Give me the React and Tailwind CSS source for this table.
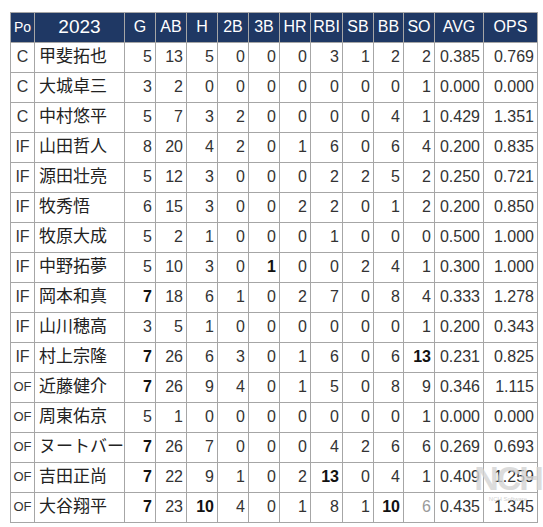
import React from "react";

const rows = [
  ["C", "甲斐拓也", "5", "13", "5", "0", "0", "0", "3", "1", "2", "2", "0.385", "0.769"],
  ["C", "大城卓三", "3", "2", "0", "0", "0", "0", "0", "0", "0", "1", "0.000", "0.000"],
  ["C", "中村悠平", "5", "7", "3", "2", "0", "0", "0", "0", "4", "1", "0.429", "1.351"],
  ["IF", "山田哲人", "8", "20", "4", "2", "0", "1", "6", "0", "6", "4", "0.200", "0.835"],
  ["IF", "源田壮亮", "5", "12", "3", "0", "0", "0", "2", "2", "5", "2", "0.250", "0.721"],
  ["IF", "牧秀悟", "6", "15", "3", "0", "0", "2", "2", "0", "1", "2", "0.200", "0.850"],
  ["IF", "牧原大成", "5", "2", "1", "0", "0", "0", "1", "0", "0", "0", "0.500", "1.000"],
  ["IF", "中野拓夢", "5", "10", "3", "0", "*1", "0", "0", "2", "4", "1", "0.300", "1.000"],
  ["IF", "岡本和真", "*7", "18", "6", "1", "0", "2", "7", "0", "8", "4", "0.333", "1.278"],
  ["IF", "山川穂高", "3", "5", "1", "0", "0", "0", "0", "0", "0", "1", "0.200", "0.343"],
  ["IF", "村上宗隆", "*7", "26", "6", "3", "0", "1", "6", "0", "6", "*13", "0.231", "0.825"],
  ["OF", "近藤健介", "*7", "26", "9", "4", "0", "1", "5", "0", "8", "9", "0.346", "1.115"],
  ["OF", "周東佑京", "5", "1", "0", "0", "0", "0", "0", "0", "0", "1", "0.000", "0.000"],
  ["OF", "ヌートバー", "*7", "26", "7", "0", "0", "0", "4", "2", "6", "6", "0.269", "0.693"],
  ["OF", "吉田正尚", "*7", "22", "9", "1", "0", "2", "*13", "0", "4", "1", "0.409", "1.259"],
  ["OF", "大谷翔平", "*7", "23", "*10", "4", "0", "1", "8", "1", "*10", "~6", "0.435", "1.345"],
];

const heads = ["G", "AB", "H", "2B", "3B", "HR", "RBI", "SB", "BB", "SO", "AVG", "OPS"];
const widths = [24, 90, 31, 31, 31, 31, 31, 31, 32, 31, 30, 31, 49, 54];

function Cell({ v }) {
  if (v.startsWith("*")) {
    return (
      <td className="border border-[#a6a6a6] text-right pr-[3px] text-[16px] font-bold text-[#111]">
        {v.slice(1)}
      </td>
    );
  }
  if (v.startsWith("~")) {
    return (
      <td className="border border-[#a6a6a6] text-right pr-[3px] text-[16px] text-[#9a9a9a]">
        {v.slice(1)}
      </td>
    );
  }
  return (
    <td className="border border-[#a6a6a6] text-right pr-[3px] text-[16px] text-[#333]">{v}</td>
  );
}

export default function App() {
  return (
    <div
      className="relative w-[543px] h-[527px] bg-white pl-[10px] pt-[12px]"
      style={{ fontFamily: "'Liberation Sans', 'Noto Sans CJK JP', Arial, sans-serif" }}
    >
      <table className="border-collapse table-fixed w-[527px]">
        <colgroup>
          {widths.map((w, i) => (
            <col key={i} style={{ width: w }} />
          ))}
        </colgroup>
        <thead>
          <tr className="h-[29px] bg-[#1f3864] text-white">
            <th className="border border-[#a6a6a6] font-normal text-[14px] text-center p-0">Po</th>
            <th className="border border-[#a6a6a6] font-normal text-[19px] text-center p-0">2023</th>
            {heads.map((h) => (
              <th key={h} className="border border-[#a6a6a6] font-normal text-[16px] text-center p-0">
                {h}
              </th>
            ))}
          </tr>
        </thead>
        <tbody>
          {rows.map((r, i) => (
            <tr key={i} className="h-[30px]">
              <td
                className={
                  "border border-[#a6a6a6] text-center p-0 text-[#333] " +
                  (r[0] === "OF" ? "text-[13px]" : "text-[16px]")
                }
              >
                {r[0]}
              </td>
              <td className="border border-[#a6a6a6] pl-[4px] text-[17px] text-[#222] whitespace-nowrap">
                {r[1]}
              </td>
              {r.slice(2).map((v, j) => (
                <Cell key={j} v={v} />
              ))}
            </tr>
          ))}
        </tbody>
      </table>
      <div className="absolute left-[484px] top-[460px] w-[48px] flex flex-col items-center pointer-events-none select-none">
        <span className="text-[34px] leading-[36px] font-bold text-[#d4d4d4] opacity-80 tracking-[-2px]">NCH</span>
        <span className="text-[6px] leading-[7px] text-[#d0d0d0]">NCH Software</span>
      </div>
    </div>
  );
}
